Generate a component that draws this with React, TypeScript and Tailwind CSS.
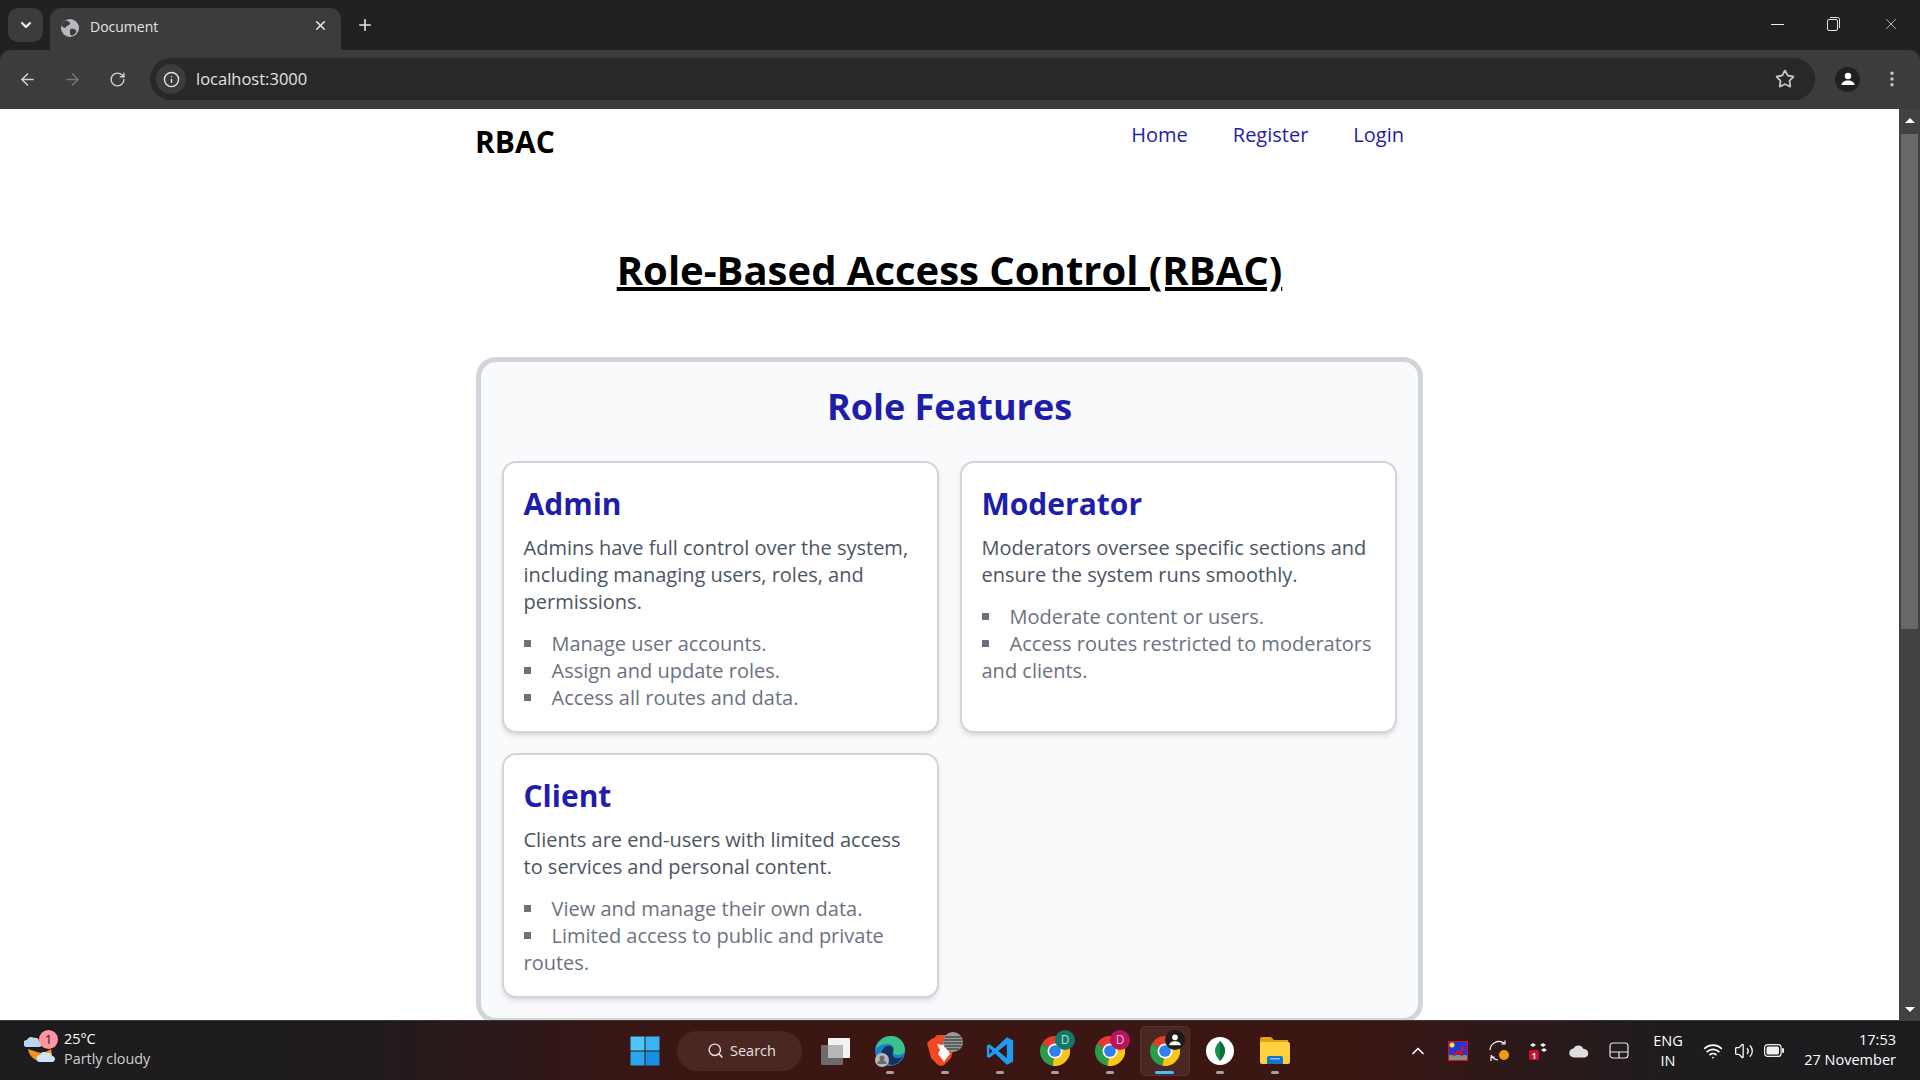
import React from 'react'
import {
  ArrowLeft,
  ArrowRight,
  ChevronDown,
  ChevronUp,
  EllipsisVertical,
  Info,
  Plus,
  RotateCw,
  Search,
  Star,
  Volume2,
  Wifi,
  X,
} from 'lucide-react'

type RoleType = {
  title: string
  text: string
  items: string[]
}

const roles: RoleType[] = [
  {
    title: 'Admin',
    text: 'Admins have full control over the system, including managing users, roles, and permissions.',
    items: ['Manage user accounts.', 'Assign and update roles.', 'Access all routes and data.'],
  },
  {
    title: 'Moderator',
    text: 'Moderators oversee specific sections and ensure the system runs smoothly.',
    items: ['Moderate content or users.', 'Access routes restricted to moderators and clients.'],
  },
  {
    title: 'Client',
    text: 'Clients are end-users with limited access to services and personal content.',
    items: ['View and manage their own data.', 'Limited access to public and private routes.'],
  },
]

const ChromeLogo = ({ size = 30 }: { size?: number }) => (
  <svg width={size} height={size} viewBox="1 1 22 22">
    <path d="M12 12L2.47 6.5A11 11 0 0 1 21.53 6.5Z" fill="#e33b2e" />
    <path d="M12 12L2.47 6.5A11 11 0 0 0 10.2 22.85Z" fill="#2a9d48" />
    <path d="M12 12L21.53 6.5A11 11 0 0 1 10.2 22.85Z" fill="#fbc61a" />
    <circle cx="12" cy="12" r="5.5" fill="#fff" />
    <circle cx="12" cy="12" r="4.3" fill="#2f7fec" />
  </svg>
)

const PersonGlyph = ({ size = 16 }: { size?: number }) => (
  <svg width={size} height={size} viewBox="0 0 16 16" fill="#fff">
    <circle cx="8" cy="5" r="3.2" />
    <path d="M1.5 14c0-3 3-4.6 6.5-4.6s6.5 1.6 6.5 4.6Z" />
  </svg>
)

const Dot = () => <span className="absolute bottom-[2px] h-[3px] w-[8px] rounded-full bg-[#a8a0a0]" />

const Slot = ({ children }: { children: React.ReactNode }) => (
  <div className="relative flex h-[50px] w-[55px] items-center justify-center">{children}</div>
)

const BrowserChrome = () => (
  <header className="h-[109px] shrink-0 bg-[#202222] font-['Open_Sans',sans-serif]">
    <div className="flex h-[50px] items-end pl-2">
      <div className="mb-2 flex h-[34px] w-[35px] items-center justify-center rounded-[10px] bg-[#3c3c3c] text-white">
        <ChevronDown size={16} strokeWidth={3} />
      </div>
      <div className="relative ml-[7px] flex h-[42px] w-[291px] items-center rounded-t-[11px] bg-[#3c3c3c] pb-[3px] pl-[11px] pr-3">
        <svg width="18" height="18" viewBox="0 0 18 18" className="shrink-0">
          <circle cx="9" cy="9" r="9" fill="#b5b8bc" />
          <path d="M5 1.5c2 1 4 1 4 3S6 6 5 8 2 8 .8 7.5 2 2.5 5 1.5ZM10 10c2-.5 4 0 5 1.500s-2 5-4 5-2-1.500-2-3-.5-3 1-3.500Z" fill="#3c3c3c" />
        </svg>
        <span className="ml-[11px] mt-[-3px] text-[14px] text-[#e3e3e3]">Document</span>
        <X size={15} strokeWidth={2.6} className="absolute left-[263px] top-[10px] text-[#e3e3e3]" />
      </div>
      <Plus size={18} strokeWidth={2.2} className="mb-[16px] ml-[15px] text-[#e3e3e3]" />
      <div className="ml-auto mb-[17px] flex items-center text-[#e3e3e3]">
        <div className="mr-[43px] h-[1px] w-[13px] bg-[#f0f0f0]" />
        <svg width="13" height="14" viewBox="0 0 13 14" fill="none" stroke="currentColor" className="mr-[42px]">
          <rect x="0.5" y="2.5" width="10" height="11" rx="1.500" />
          <path d="M3 .5h7.500a2 2 0 0 1 2 2V11" />
        </svg>
        <X size={18} strokeWidth={1} className="mr-[20px]" />
      </div>
    </div>
    <div className="flex h-[59px] items-center rounded-t-[10px] bg-[#3c3c3c] pb-[1px]">
      <ArrowLeft size={19} strokeWidth={2} className="ml-[18px] text-[#d0d0d0]" />
      <ArrowRight size={19} strokeWidth={2} className="ml-[26px] text-[#767676]" />
      <RotateCw size={17} strokeWidth={2} className="ml-[27px] text-[#d0d0d0]" />
      <div className="ml-[24px] flex h-[42px] w-[1665px] items-center rounded-full bg-[#282828] pl-[6px] pr-[20px]">
        <div className="flex h-[30px] w-[30px] items-center justify-center rounded-full bg-[#3c3c3c] text-[#e3e3e3]">
          <Info size={17} strokeWidth={2} />
        </div>
        <span className="ml-[10px] text-[16.5px] text-[#e3e3e3]">localhost:3000</span>
        <Star size={20} strokeWidth={2.2} className="ml-auto text-[#c4c4c4]" />
      </div>
      <div className="ml-[20px] flex h-[25px] w-[25px] items-center justify-center rounded-full bg-[#202020]">
        <PersonGlyph />
      </div>
      <EllipsisVertical size={20} strokeWidth={2.2} className="ml-[22px] text-[#c4c4c4]" />
    </div>
  </header>
)

const Page = () => (
  <div className="min-w-0 flex-1 overflow-hidden bg-white font-['Open_Sans',sans-serif]">
    <div className="mx-auto w-[947px]">
      <nav className="flex items-start justify-between pr-[19px]">
        <span className="ml-[-1px] mt-[11px] text-[30px] font-bold leading-[44px] text-black">RBAC</span>
        <ul className="flex gap-[45px] pt-[11px] text-[20px] leading-[30px] text-[#1e1eaa]">
          <li>Home</li>
          <li>Register</li>
          <li>Login</li>
        </ul>
      </nav>
      <h1 className="mt-[76px] text-center text-[40px] font-bold leading-[60px] text-black underline">
        Role-Based Access Control (RBAC)
      </h1>
      <section className="mt-[57px] rounded-[20px] border-[5px] border-[#d1d5db] bg-[#f9fafb] px-[21px] pb-[20px] pt-[18px]">
        <h2 className="text-center text-[36px] font-bold leading-[54px] text-[#1e1eaa]">Role Features</h2>
        <div className="mt-[27px] grid grid-cols-2 gap-x-[21px] gap-y-[20px]">
          {roles.map((role) => (
            <div
              key={role.title}
              className="rounded-[14px] border-2 border-[#d1d5db] bg-white px-[19.5px] py-[20px] shadow-md"
            >
              <h3 className="text-[30px] font-bold leading-[42px] text-[#1e1eaa]">{role.title}</h3>
              <p className="mt-[9px] text-[20px] leading-[27px] text-[#4b5563]">{role.text}</p>
              <ul className="mt-[15px] list-inside list-[square] text-[20px] leading-[27px] text-[#6b7280]">
                {role.items.map((item) => (
                  <li key={item}>{item}</li>
                ))}
              </ul>
            </div>
          ))}
        </div>
      </section>
    </div>
  </div>
)

const Scrollbar = () => (
  <div className="flex w-[21px] shrink-0 flex-col items-center bg-[#424242]">
    <div className="mt-[9px] h-0 w-0 border-x-[5px] border-b-[5px] border-x-transparent border-b-white" />
    <div className="mt-[11px] h-[495px] w-[17px] bg-[#686868]" />
    <div className="mb-[8px] mt-auto h-0 w-0 border-x-[5px] border-t-[5px] border-x-transparent border-t-white" />
  </div>
)

const Taskbar = () => (
  <footer className="flex h-[60px] shrink-0 items-center border-t border-[#3a3a3a] bg-[linear-gradient(90deg,#1c1c1f_0%,#1f1b1d_18%,#3c1613_36%,#3c1613_70%,#1d1c1f_88%,#1c1c1f_100%)] font-['Open_Sans',sans-serif] text-white">
    <div className="relative flex w-[617px] shrink-0 items-center pl-[64px]">
      <svg width="34" height="30" viewBox="0 0 34 30" className="absolute left-[24px] top-[3px]">
        <path d="M4 14c1 9 12 17 23 9 1-2 1-5 0-9-3 2-9 5-14 3-3-1-6-2-9-3Z" fill="#f0941e" />
        <path d="M3 12a3.500 3.500 0 0 1 0-7c1-3 5-4 7-2 3-1 5 1 5 3 2 0 3 2 3 3s-1 3-3 3Z" fill="#bcd5f2" />
        <path d="M16 27a3.500 3.500 0 0 1 0-7c1-3 5-4 7-2 3-1 5 1 5 3 2 0 3 2 3 3s-1 3-3 3Z" fill="#cfe2f7" />
      </svg>
      <span className="absolute left-[39px] top-[-2px] flex h-[19px] w-[19px] items-center justify-center rounded-full bg-[#ff94a2] text-[13px] text-[#1c1c1f]">
        1
      </span>
      <div className="mt-[-3px] leading-[20px]">
        <div className="text-[14.4px]">25°C</div>
        <div className="text-[14.4px] text-[#cfcfcf]">Partly cloudy</div>
      </div>
    </div>
    <Slot>
      <svg width="30" height="30" viewBox="0 0 30 30">
        <rect x="0.500" y="0.500" width="14" height="14" fill="#4fc6f7" />
        <rect x="15.500" y="0.500" width="14" height="14" fill="#3bb4f2" />
        <rect x="0.500" y="15.500" width="14" height="14" fill="#2aa5ee" />
        <rect x="15.500" y="15.500" width="14" height="14" fill="#1690e3" />
      </svg>
    </Slot>
    <div className="ml-[5px] mr-[5px] flex h-[40px] w-[125px] items-center justify-center gap-[6px] rounded-full bg-[#4a2723] pl-[4px] text-[14.5px] text-[#e8e2e0]">
      <Search size={17} strokeWidth={2} />
      Search
    </div>
    <div className="flex">
      <Slot>
        <svg width="30" height="30" viewBox="0 0 30 30">
          <rect x="8" y="2" width="22" height="20" rx="1" fill="#f2f2f2" />
          <rect x="1" y="9" width="22" height="20" rx="1" fill="#6c6a6a" />
          <rect x="8" y="9" width="15" height="13" fill="#b8b6b6" />
        </svg>
      </Slot>
      <Slot>
        <svg width="32" height="32" viewBox="0 0 32 32">
          <circle cx="16" cy="16" r="15" fill="#1a7fd0" />
          <path d="M1 15C3 5 12 1 17 1c8 0 14 6 14 14 0 3-3 5-7 5-3 0-5-1-5-3 2-3 0-8-5-8-6 0-12 3-13 6Z" fill="#38c38d" />
          <path d="M13 26c-5-2-7-8-4-12 2-3 5-4 8-3 2 1 3 3 2 6-1 4 1 6 5 6 2 0 4-.500 5-2-2 5-7 9-12 9-1 0-3-2-4-4Z" fill="#14325c" />
          <circle cx="8" cy="25" r="7" fill="#b9b9b9" />
          <circle cx="8" cy="23" r="2.500" fill="#6b6b6b" />
          <path d="M3.500 29c0-3 2-4 4.500-4s4.500 1 4.500 4Z" fill="#6b6b6b" />
        </svg>
        <Dot />
      </Slot>
      <Slot>
        <svg width="36" height="38" viewBox="0 0 36 38">
          <path d="M4 7l3-1 3-3h10l3 3 3 1 2 4-2 7-2 8-7 7-3 1-3-1-7-7-2-8-2-7Z" fill="#f1481f" />
          <path d="M10 12l5 1 2-1 2 1 5-1-3 6 2 4-4 5-2 3-2-3-4-5 2-4Z" fill="#fff" />
          <circle cx="26" cy="10" r="10" fill="#9a9a9a" />
          <path d="M18 5h16M16.500 8h19M16.500 11h19M17.500 14h17M20 17h12" stroke="#4b4b4b" strokeWidth="1.400" />
        </svg>
        <Dot />
      </Slot>
      <Slot>
        <svg width="30" height="30" viewBox="0 0 24 24">
          <path d="M17.500 1L8 10 3.500 6.500 1.500 7.500v9l2 1L8 14l9.500 9 5-2.500v-17Z" fill="#1f9cf0" />
          <path d="M17.500 6.500L10.500 12l7 5.500ZM3.500 9.500v5L6 12Z" fill="#3c1613" />
        </svg>
        <Dot />
      </Slot>
      <Slot>
        <ChromeLogo />
        <span className="absolute left-[28px] top-[4px] flex h-[20px] w-[20px] items-center justify-center rounded-full bg-[#12796a] text-[12px] text-[#b5e0d4]">
          D
        </span>
        <Dot />
      </Slot>
      <Slot>
        <ChromeLogo />
        <span className="absolute left-[28px] top-[4px] flex h-[20px] w-[20px] items-center justify-center rounded-full bg-[#b8155e] text-[12px] text-[#f5bcd3]">
          D
        </span>
        <Dot />
      </Slot>
      <Slot>
        <div className="absolute inset-y-0 left-[3px] right-[2px] rounded-[5px] border border-[#523430] bg-[#4a2723]" />
        <div className="relative flex"><ChromeLogo /></div>
        <span className="absolute left-[28px] top-[4px] flex h-[20px] w-[20px] items-center justify-center rounded-full bg-[#1c1c1c]">
          <PersonGlyph size={14} />
        </span>
        <span className="absolute bottom-[2px] h-[3px] w-[19px] rounded-full bg-[#47bdfc]" />
      </Slot>
      <Slot>
        <svg width="28" height="28" viewBox="0 0 28 28">
          <circle cx="14" cy="14" r="14" fill="#fff" />
          <path d="M14 4c4 4 5 7 5 10s-2 7-5 10c-3-3-5-7-5-10s1-6 5-10Z" fill="#12924f" />
          <path d="M14 4c4 4 5 7 5 10s-2 7-5 10Z" fill="#0b6b3a" />
        </svg>
        <Dot />
      </Slot>
      <Slot>
        <svg width="30" height="27" viewBox="0 0 30 27">
          <path d="M0 2a2 2 0 0 1 2-2h9l3 3h14v6H0Z" fill="#e2a30d" />
          <path d="M0 5h28a2 2 0 0 1 2 2v18a2 2 0 0 1-2 2H2a2 2 0 0 1-2-2Z" fill="#ffd13f" />
          <path d="M7 27v-6a2 2 0 0 1 2-2h12a2 2 0 0 1 2 2v6Z" fill="#1275c8" />
          <rect x="10" y="21" width="10" height="1.500" fill="#7cc4f5" />
        </svg>
        <Dot />
      </Slot>
    </div>
    <div className="ml-auto flex items-center pr-[24px]">
      <ChevronUp size={20} strokeWidth={2} />
      <svg width="20" height="20" viewBox="0 0 20 20" className="ml-[20px]">
        <rect width="20" height="20" fill="#e01010" />
        <rect x="1" y="1" width="18" height="18" fill="#2436d6" />
        <circle cx="4" cy="4" r="2.500" fill="#ffe22a" />
        <rect x="1" y="14" width="18" height="5" fill="#8a8a8a" />
        <path d="M5 15l4-5 4-1 2-6 1 5-2 4 1 3h-2l-1-3-3 1-2 2Z" fill="#e01010" />
      </svg>
      <svg width="22" height="22" viewBox="0 0 22 22" fill="none" stroke="#fff" strokeWidth="1.200" className="ml-[21px]">
        <path d="M1 10a9 9 0 0 1 14-7M16 .5V4h-3.500M2 15a9 9 0 0 0 7 5M2 21v-4h3.500" />
        <circle cx="15" cy="15" r="5" fill="#f29a12" stroke="none" />
      </svg>
      <svg width="20" height="20" viewBox="0 0 20 20" className="ml-[18px]">
        <rect x="0" y="9" width="10" height="10" rx="1.500" fill="#c8102e" />
        <text x="5" y="17.500" textAnchor="middle" fontSize="8" fontWeight="700" fill="#fff">1</text>
        <path d="M1 4l3-2 3 2-3 2ZM11 4l3-2 3 2-3 2ZM12 9l3-2 3 2-3 2Z" fill="#eee" />
      </svg>
      <svg width="20" height="14" viewBox="0 0 20 14" className="ml-[20px]" fill="#dedede">
        <path d="M5 13.500a4.500 4.500 0 0 1-.5-9 5.500 5.500 0 0 1 10 .5 4 4 0 0 1 1 8.500Z" />
      </svg>
      <svg width="20" height="17" viewBox="0 0 20 17" fill="none" stroke="#e6e6e6" strokeWidth="1.200" className="ml-[20px]">
        <rect x="1" y="1" width="18" height="15" rx="3" />
        <path d="M1 10h18M10 10v6" />
      </svg>
      <div className="ml-[20px] w-[38px] text-center text-[14.5px] leading-[20px]">
        <div>ENG</div>
        <div>IN</div>
      </div>
      <Wifi size={20} strokeWidth={2} className="ml-[16px]" />
      <Volume2 size={20} strokeWidth={1.500} className="ml-[11px]" />
      <svg width="20" height="13" viewBox="0 0 20 13" fill="none" className="ml-[10px]">
        <rect x="0.600" y="0.600" width="16.500" height="11.800" rx="3" stroke="#f0f0f0" strokeWidth="1.200" />
        <rect x="2.500" y="2.500" width="12.500" height="8" rx="1.500" fill="#f0f0f0" />
        <rect x="18" y="4" width="2" height="5" rx="1" fill="#f0f0f0" />
      </svg>
      <div className="ml-[20px] mt-[-2px] w-[92px] text-right text-[14.5px] leading-[20px]">
        <div>17:53</div>
        <div>27 November</div>
      </div>
    </div>
  </footer>
)

const App = () => {
  return (
    <div className="flex h-screen w-screen flex-col overflow-hidden">
      <BrowserChrome />
      <div className="flex min-h-0 flex-1">
        <Page />
        <Scrollbar />
      </div>
      <Taskbar />
    </div>
  )
}

export default App
